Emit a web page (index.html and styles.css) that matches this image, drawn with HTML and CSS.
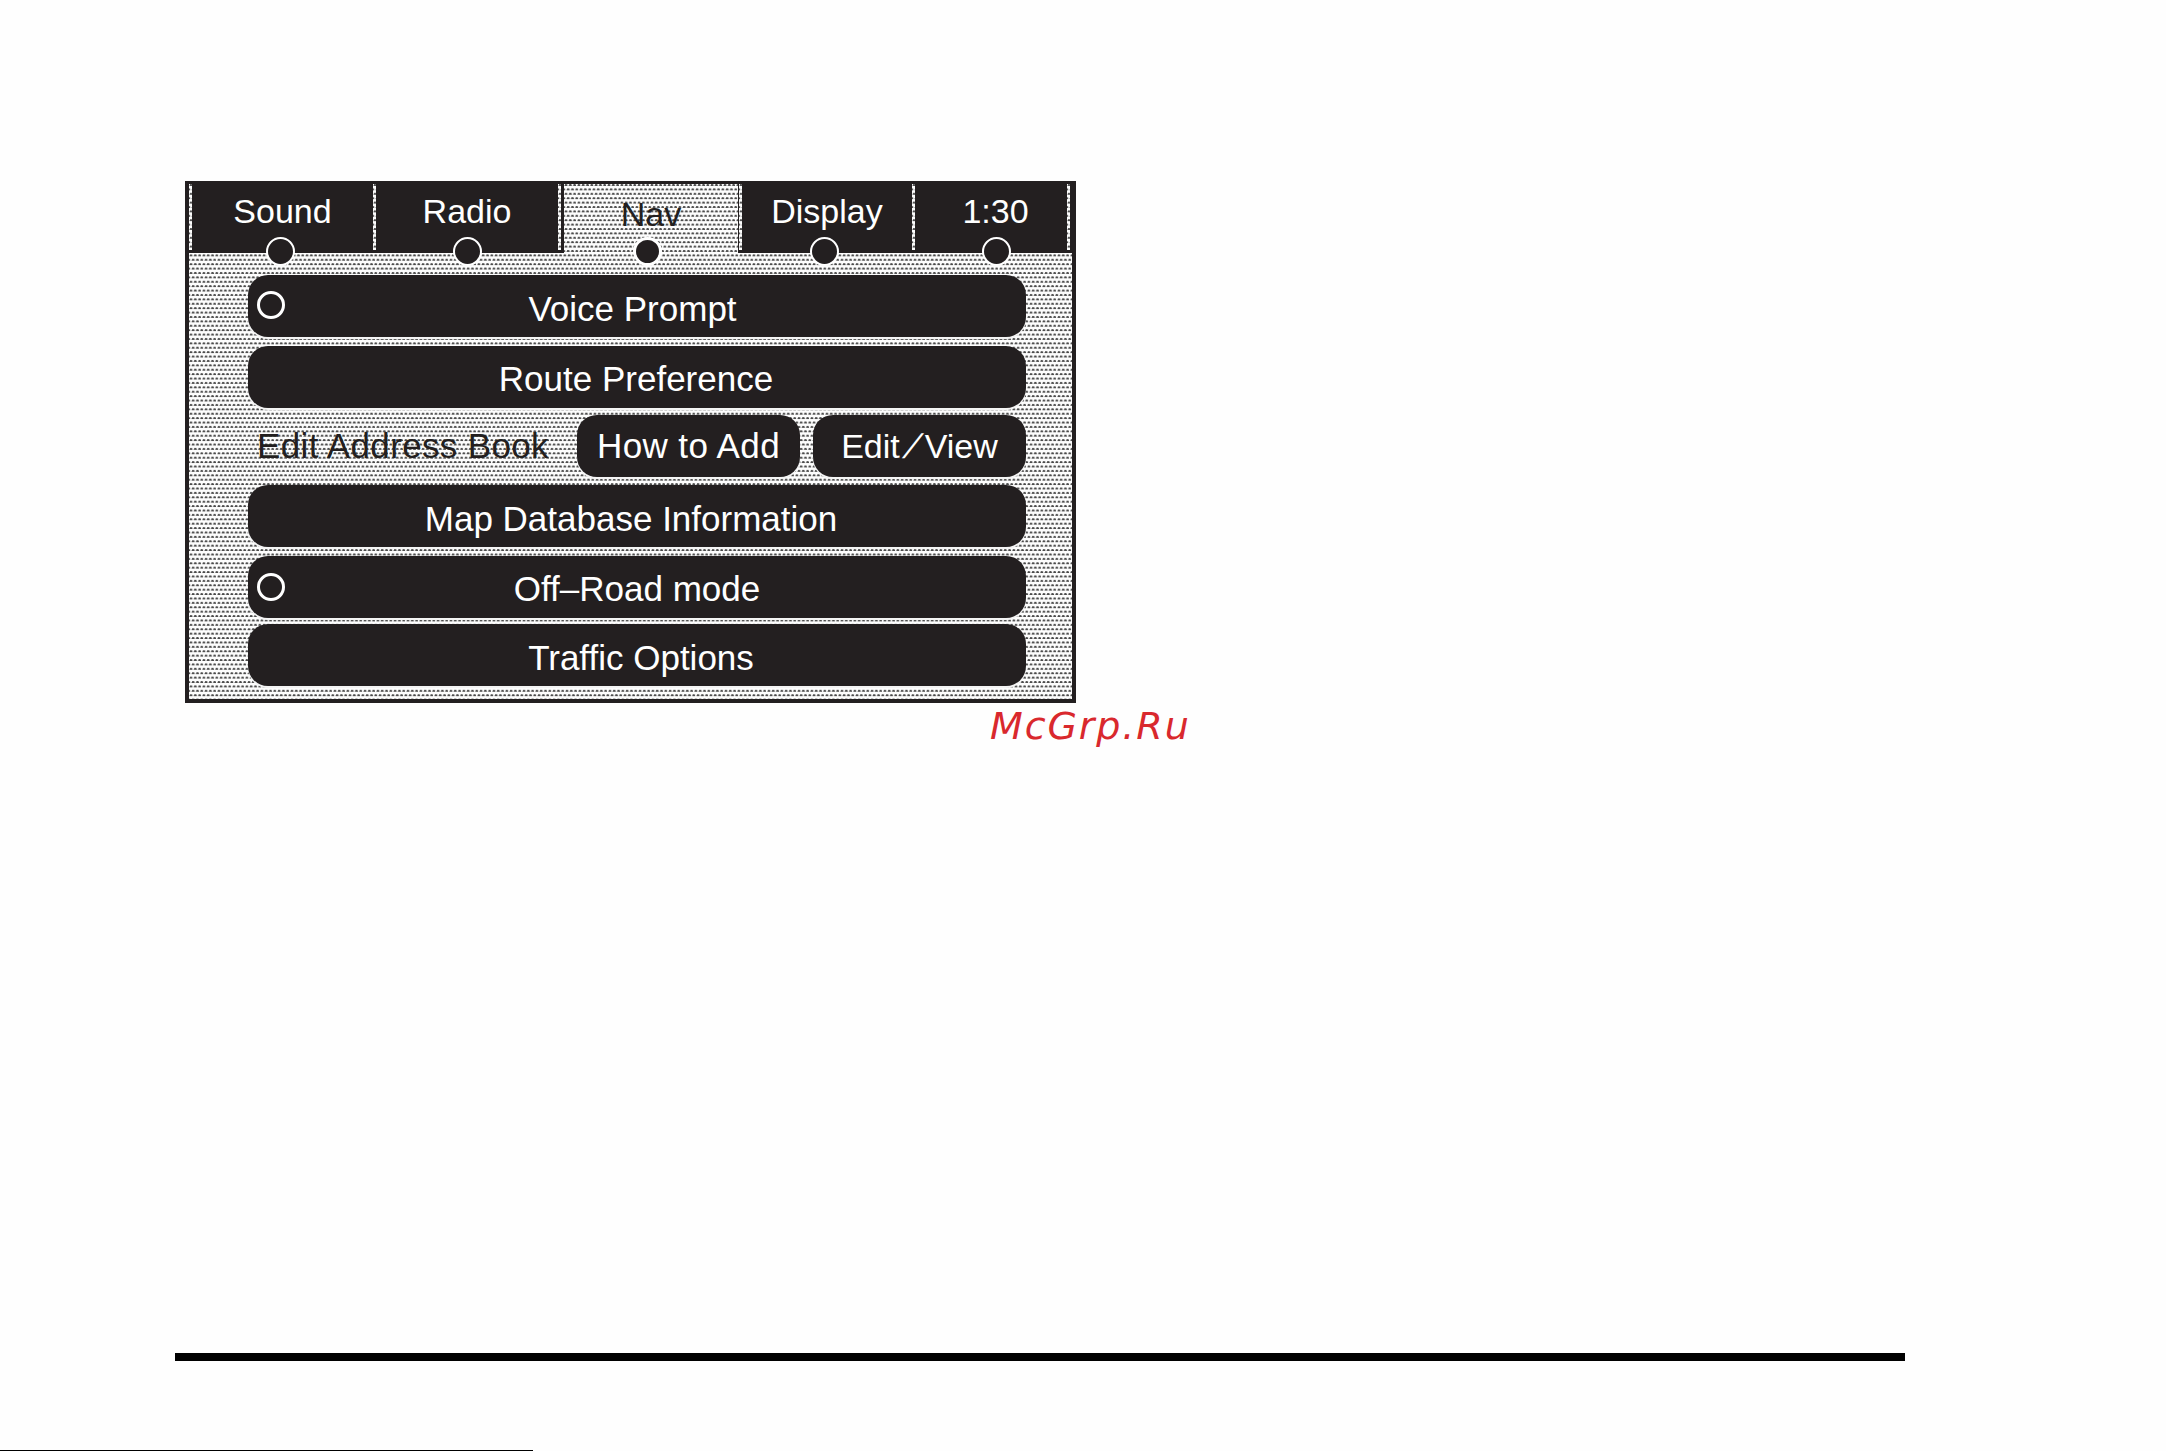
FILE: index.html
```html
<!DOCTYPE html>
<html lang="en">
<head>
    <meta charset="UTF-8">
    <title>Nav settings</title>
    <link rel="stylesheet" href="styles.css">
</head>
<body>
    <main class="page">
        <section class="screen">
            <nav class="tabs">
                <span class="tab-rule"></span>
                <div class="tab tab-sound">Sound<span class="tab-dot"></span></div>
                <span class="tab-rule"></span>
                <div class="tab tab-radio">Radio<span class="tab-dot"></span></div>
                <span class="tab-rule"></span>
                <span class="tab-edge tab-edge-left"></span>
                <div class="tab tab-nav active">Nav<span class="tab-dot"></span></div>
                <span class="tab-edge tab-edge-right"></span>
                <span class="tab-rule"></span>
                <div class="tab tab-display">Display<span class="tab-dot"></span></div>
                <span class="tab-rule"></span>
                <div class="tab tab-clock">1:30<span class="tab-dot"></span></div>
                <span class="tab-rule"></span>
            </nav>

            <div class="menu">
                <div class="btn btn-voice"><span class="btn-ring"></span>Voice Prompt</div>
                <div class="btn btn-route">Route Preference</div>
                <div class="address-row">
                    <span class="address-label">Edit Address Book</span>
                    <div class="btn btn-add">How to Add</div>
                    <div class="btn btn-edit">Edit<span class="slash">/</span>View</div>
                </div>
                <div class="btn btn-map">Map Database Information</div>
                <div class="btn btn-offroad"><span class="btn-ring"></span>Off–Road mode</div>
                <div class="btn btn-traffic">Traffic Options</div>
            </div>
        </section>

        <div class="watermark">McGrp.Ru</div>
        <div class="page-rule"></div>
        <div class="page-edge"></div>
    </main>
</body>
</html>
```

FILE: styles.css
```css
/* Basic Reset */
* {
    margin: 0;
    padding: 0;
    box-sizing: border-box;
}

html, body {
    height: 1451px;
    overflow: hidden;
    background: #fefefe;
}

body {
    font-family: "Liberation Sans", Arial, sans-serif;
    color: #fff;
}

.page {
    position: relative;
    height: 1451px;
    padding: 181px 0 0 185px;
}

/* Dithered screen */
.screen,
.tab-rule,
.tab-nav {
    background-color: #fdfdfd;
    background-image:
        radial-gradient(ellipse 1.9px 1.2px at 2px 1.2px, #4a4a4a 65%, transparent 100%),
        radial-gradient(ellipse 1.9px 1.2px at 2px 1.2px, #4a4a4a 65%, transparent 100%);
    background-size: 4.3px 8.8px;
    background-position: 0 0, 2.15px 4.4px;
}

.screen {
    width: 891px;
    height: 522px;
    border: 4px solid #231f20;
    border-top-width: 3px;
}

/* Tabs */
.tabs {
    display: flex;
    height: 69px;
    background: #231f20;
}

.tab {
    position: relative;
    height: 69px;
    padding-top: 7px;
    font-size: 34px;
    line-height: 40px;
    text-align: center;
}

.tab-rule {
    flex: none;
    width: 3px;
    height: 66px;
}

.tab-edge {
    flex: none;
    width: 3px;
}

.tab-edge-right {
    width: 1px;
}

.tab-sound { width: 181px; }
.tab-radio { width: 182px; }
.tab-nav { width: 174px; padding-top: 10px; color: #231f20; }
.tab-display { width: 170px; }
.tab-clock { width: 152px; padding-left: 9px; }

.tab-dot {
    position: absolute;
    left: 50%;
    bottom: -13px;
    width: 29px;
    height: 29px;
    margin-left: -14px;
    border: 2px solid #fff;
    border-radius: 50%;
    background: #231f20;
}

.tab-sound .tab-dot { margin-left: -17px; }
.tab-nav .tab-dot { margin-left: -18px; border-width: 3px; }
.tab-display .tab-dot { margin-left: -17px; }
.tab-clock .tab-dot { margin-left: -9px; }

/* Menu buttons */
.menu {
    display: flex;
    flex-direction: column;
    gap: 8px;
    padding: 22px 46px 0 59px;
}

.btn {
    position: relative;
    display: flex;
    align-items: center;
    justify-content: center;
    height: 62px;
    padding-top: 6px;
    border-radius: 20px;
    background: #231f20;
    box-shadow: 0 2px 0 #f4f4f4;
    font-size: 35px;
}

.btn-ring {
    position: absolute;
    left: 9px;
    top: 16px;
    width: 28px;
    height: 28px;
    border: 3px solid #fff;
    border-radius: 50%;
}

.btn-voice { padding-right: 9px; }
.btn-route { padding-top: 4px; padding-right: 2px; margin-top: 1px; margin-bottom: -1px; }
.btn-map { padding-right: 12px; }
.btn-offroad { margin-top: 1px; margin-bottom: -1px; padding-top: 3px; }
.btn-offroad .btn-ring { top: 17px; }
.btn-traffic { padding-left: 8px; padding-top: 6px; margin-top: -1px; }

.address-row {
    display: flex;
    align-items: center;
    height: 62px;
}

.address-label {
    width: 329px;
    padding-left: 9px;
    color: #231f20;
    font-size: 35px;
    letter-spacing: .35px;
    white-space: nowrap;
}

.btn-add {
    width: 223px;
    margin-right: 13px;
    padding-top: 0;
    letter-spacing: .4px;
}

.btn-edit {
    width: 213px;
    padding-top: 0;
    font-size: 34px;
}

.slash {
    display: inline-block;
    width: 25px;
    text-align: center;
    transform: skewX(-27deg);
}

/* Page furniture */
.watermark {
    position: absolute;
    left: 990px;
    top: 704px;
    color: #d9282d;
    font-family: "DejaVu Sans", sans-serif;
    font-size: 38px;
    font-style: italic;
    letter-spacing: 1.9px;
    white-space: nowrap;
}

.page-rule {
    width: 1730px;
    height: 8px;
    margin: 650px 0 0 -10px;
    background: #000;
}

.page-edge {
    width: 533px;
    height: 1px;
    margin: 89px 0 0 -185px;
    background: #000;
}
```
